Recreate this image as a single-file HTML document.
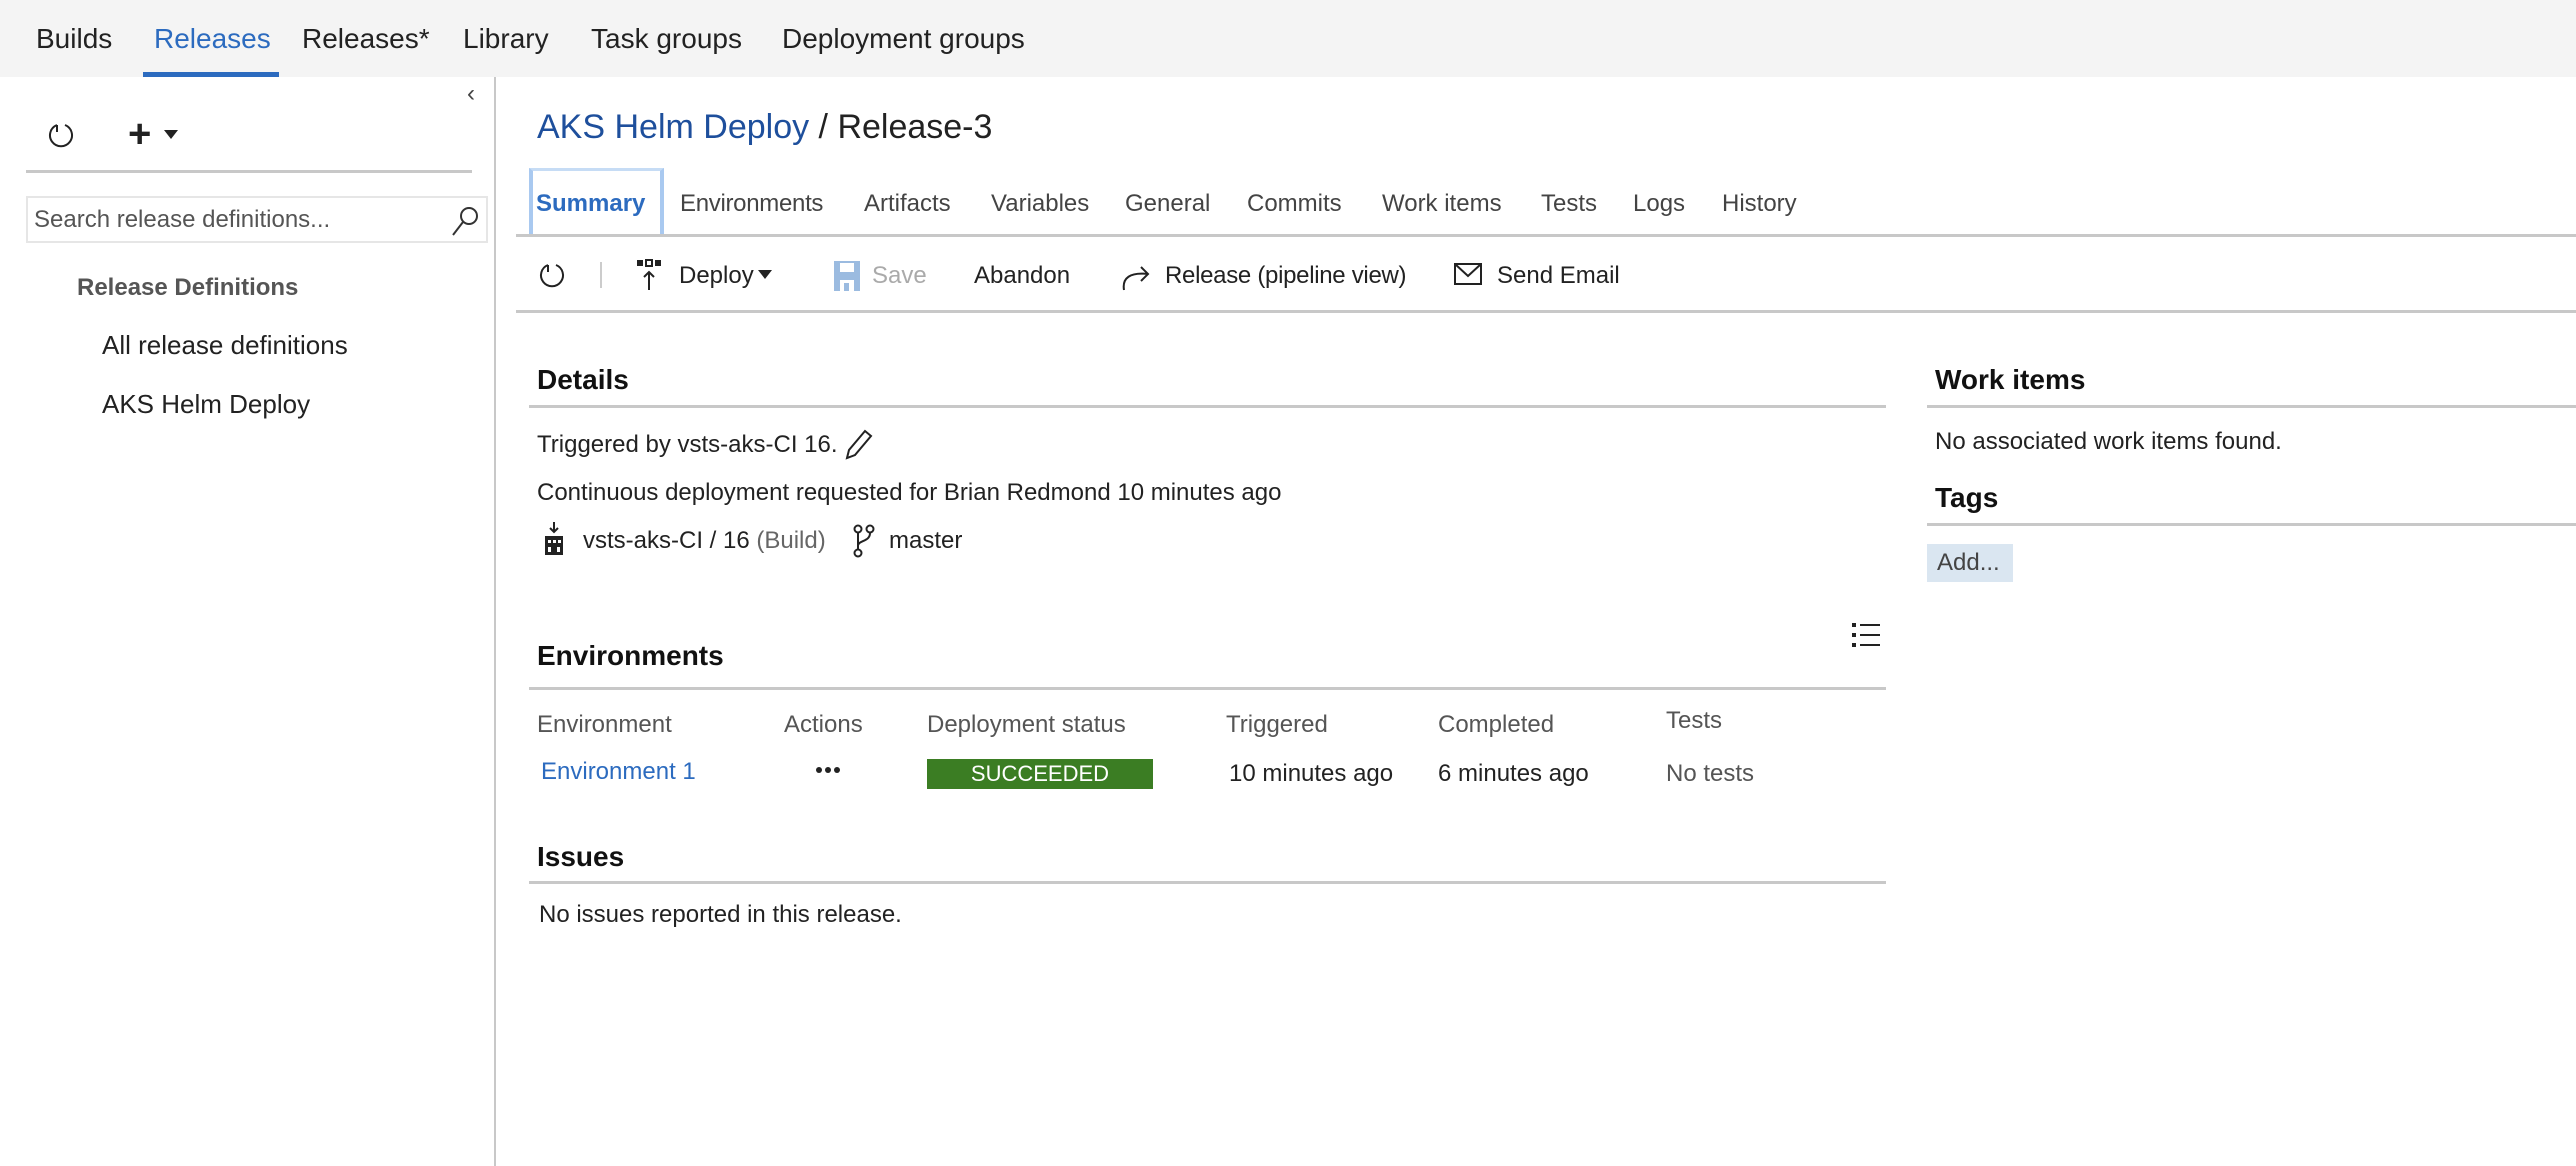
<!DOCTYPE html>
<html><head><meta charset="utf-8"><style>
*{margin:0;padding:0;box-sizing:border-box}
body{width:2576px;height:1166px;position:relative;background:#fff;font-family:"Liberation Sans",sans-serif;color:#222;overflow:hidden}
.a{position:absolute;white-space:nowrap;line-height:1}
.t{font-size:24px}
.h{font-size:28px;font-weight:bold;color:#111}
.ln{position:absolute;height:3px;background:#c8c8c8}
svg{position:absolute;overflow:visible}
</style></head><body>
<div style="position:absolute;left:0;top:0;width:2576px;height:77px;background:#f4f4f4"></div>
<div class="a" style="left:36px;top:25px;font-size:28px">Builds</div>
<div class="a" style="left:154px;top:25px;font-size:28px;color:#2c6bbf">Releases</div>
<div style="position:absolute;left:143px;top:72px;width:136px;height:5px;background:#2c6bbf"></div>
<div class="a" style="left:302px;top:25px;font-size:28px">Releases*</div>
<div class="a" style="left:463px;top:25px;font-size:28px">Library</div>
<div class="a" style="left:591px;top:25px;font-size:28px">Task groups</div>
<div class="a" style="left:782px;top:25px;font-size:28px">Deployment groups</div>

<div style="position:absolute;left:494px;top:77px;width:2px;height:1089px;background:#c8c8c8"></div>
<div class="a" style="left:467px;top:82px;font-size:24px;color:#444">‹</div>
<svg style="left:47px;top:121px" width="30" height="30" viewBox="0 0 30 30"><path d="M10 4 A11 11 0 1 0 18 4 M10 4 L10 11" fill="none" stroke="#222" stroke-width="2"/></svg>
<div class="a" style="left:128px;top:114px;font-size:40px;font-weight:bold">+</div>
<svg style="left:164px;top:130px" width="14" height="10"><path d="M0 0H14L7 9Z" fill="#222"/></svg>
<div class="ln" style="left:26px;top:170px;width:446px"></div>
<div style="position:absolute;left:26px;top:196px;width:462px;height:47px;border:2px solid #e6e6e6"></div>
<div class="a t" style="left:34px;top:208px;color:#555">Search release definitions...</div>
<svg style="left:450px;top:205px" width="30" height="32" viewBox="0 0 30 32"><circle cx="19" cy="11" r="8" fill="none" stroke="#333" stroke-width="2"/><path d="M13 17 L3 30" stroke="#333" stroke-width="2"/></svg>
<div class="a" style="left:77px;top:276px;font-size:24px;font-weight:bold;color:#555">Release Definitions</div>
<div class="a" style="left:102px;top:332px;font-size:26px">All release definitions</div>
<div class="a" style="left:102px;top:391px;font-size:26px">AKS Helm Deploy</div>

<div class="a" style="left:537px;top:110px;font-size:34px;color:#1e4f9c">AKS Helm Deploy <span style="color:#222">/ Release-3</span></div>

<div style="position:absolute;left:529px;top:168px;width:135px;height:67px;border:3px solid #c6dcf5;border-left:4px solid #a9c9f0;border-right:4px solid #a9c9f0;border-bottom:none"></div>
<div class="a t" style="left:536px;top:192px;color:#2c6bbf;font-weight:bold">Summary</div>
<div class="a t" style="left:680px;top:192px;color:#444;letter-spacing:-0.3px">Environments</div>
<div class="a t" style="left:864px;top:192px;color:#444">Artifacts</div>
<div class="a t" style="left:991px;top:192px;color:#444">Variables</div>
<div class="a t" style="left:1125px;top:192px;color:#444">General</div>
<div class="a t" style="left:1247px;top:192px;color:#444">Commits</div>
<div class="a t" style="left:1382px;top:192px;color:#444">Work items</div>
<div class="a t" style="left:1541px;top:192px;color:#444">Tests</div>
<div class="a t" style="left:1633px;top:192px;color:#444">Logs</div>
<div class="a t" style="left:1722px;top:192px;color:#444">History</div>
<div class="ln" style="left:516px;top:234px;width:2060px"></div>

<svg style="left:538px;top:261px" width="30" height="30" viewBox="0 0 30 30"><path d="M10 4 A11 11 0 1 0 18 4 M10 4 L10 11" fill="none" stroke="#222" stroke-width="2"/></svg>
<div style="position:absolute;left:600px;top:262px;width:2px;height:26px;background:#ccc"></div>
<svg style="left:636px;top:258px" width="28" height="34" viewBox="0 0 28 34"><rect x="1" y="2" width="6" height="6" fill="#222"/><rect x="10" y="2" width="6" height="6" fill="none" stroke="#222" stroke-width="2"/><rect x="19" y="2" width="6" height="6" fill="#222"/><path d="M13 32 V14 M8 19 L13 14 L18 19" fill="none" stroke="#222" stroke-width="2"/></svg>
<div class="a t" style="left:679px;top:264px">Deploy</div>
<svg style="left:758px;top:270px" width="14" height="10"><path d="M0 0H14L7 9Z" fill="#222"/></svg>
<svg style="left:834px;top:261px" width="26" height="30" viewBox="0 0 26 30"><rect x="0" y="0" width="26" height="30" fill="#9bbbe0"/><rect x="6" y="2" width="14" height="9" fill="#fff"/><rect x="6" y="19" width="14" height="11" fill="#fff"/><rect x="10" y="22" width="5" height="8" fill="#9bbbe0"/></svg>
<div class="a t" style="left:872px;top:264px;color:#aaa">Save</div>
<div class="a t" style="left:974px;top:264px">Abandon</div>
<svg style="left:1120px;top:260px" width="32" height="32" viewBox="0 0 32 32"><path d="M4 30 C2 18 10 12 28 14 M21 7 L28 14 L21 21" fill="none" stroke="#222" stroke-width="2"/></svg>
<div class="a t" style="left:1165px;top:264px;letter-spacing:-0.3px">Release (pipeline view)</div>
<svg style="left:1454px;top:263px" width="28" height="22" viewBox="0 0 28 22"><rect x="1" y="1" width="26" height="20" fill="none" stroke="#222" stroke-width="2"/><path d="M1 1 L14 13 L27 1" fill="none" stroke="#222" stroke-width="2"/></svg>
<div class="a t" style="left:1497px;top:264px">Send Email</div>
<div class="ln" style="left:516px;top:310px;width:2060px"></div>

<div class="a h" style="left:537px;top:366px">Details</div>
<div class="ln" style="left:529px;top:405px;width:1357px"></div>
<div class="a t" style="left:537px;top:433px">Triggered by vsts-aks-CI 16.</div>
<svg style="left:843px;top:428px" width="30" height="32" viewBox="0 0 30 32"><path d="M4 30 L6 22 L22 3 L28 8 L12 27 Z M4 30 L12 27" fill="none" stroke="#222" stroke-width="2"/></svg>
<div class="a t" style="left:537px;top:481px">Continuous deployment requested for Brian Redmond 10 minutes ago</div>
<svg style="left:543px;top:522px" width="22" height="34" viewBox="0 0 22 34"><path d="M11 0 V10 M7 6 L11 10 L15 6" fill="none" stroke="#222" stroke-width="2"/><rect x="2" y="14" width="18" height="19" fill="#222"/><rect x="5" y="18" width="3" height="3" fill="#fff"/><rect x="10" y="18" width="3" height="3" fill="#fff"/><rect x="15" y="18" width="3" height="3" fill="#fff"/><rect x="5" y="25" width="3" height="5" fill="#fff"/><rect x="14" y="25" width="3" height="5" fill="#fff"/></svg>
<div class="a t" style="left:583px;top:529px">vsts-aks-CI / 16 <span style="color:#666">(Build)</span></div>
<svg style="left:852px;top:524px" width="24" height="34" viewBox="0 0 24 34"><circle cx="6" cy="5" r="3.5" fill="none" stroke="#222" stroke-width="2"/><circle cx="18" cy="5" r="3.5" fill="none" stroke="#222" stroke-width="2"/><circle cx="6" cy="29" r="3.5" fill="none" stroke="#222" stroke-width="2"/><path d="M6 9 V25 M18 9 C18 18 6 16 6 22" fill="none" stroke="#222" stroke-width="2"/></svg>
<div class="a t" style="left:889px;top:529px">master</div>

<svg style="left:1852px;top:623px" width="28" height="24" viewBox="0 0 28 24"><rect x="0" y="0" width="4" height="4" fill="#222"/><rect x="8" y="1" width="20" height="2" fill="#222"/><rect x="0" y="10" width="4" height="4" fill="#222"/><rect x="8" y="11" width="20" height="2" fill="#222"/><rect x="0" y="20" width="4" height="4" fill="#222"/><rect x="8" y="21" width="20" height="2" fill="#222"/></svg>
<div class="a h" style="left:537px;top:642px">Environments</div>
<div class="ln" style="left:529px;top:687px;width:1357px"></div>
<div class="a t" style="left:537px;top:713px;color:#555">Environment</div>
<div class="a t" style="left:784px;top:713px;color:#555">Actions</div>
<div class="a t" style="left:927px;top:713px;color:#555">Deployment status</div>
<div class="a t" style="left:1226px;top:713px;color:#555">Triggered</div>
<div class="a t" style="left:1438px;top:713px;color:#555">Completed</div>
<div class="a t" style="left:1666px;top:709px;color:#555">Tests</div>
<div class="a t" style="left:541px;top:760px;color:#2c6bbf">Environment 1</div>
<svg style="left:816px;top:767px" width="24" height="6"><circle cx="3" cy="3" r="3" fill="#222"/><circle cx="12" cy="3" r="3" fill="#222"/><circle cx="21" cy="3" r="3" fill="#222"/></svg>
<div style="position:absolute;left:927px;top:759px;width:226px;height:30px;background:#3b7d23;color:#fff;font-size:22px;text-align:center;line-height:30px">SUCCEEDED</div>
<div class="a t" style="left:1229px;top:762px">10 minutes ago</div>
<div class="a t" style="left:1438px;top:762px">6 minutes ago</div>
<div class="a t" style="left:1666px;top:762px;color:#555">No tests</div>

<div class="a h" style="left:537px;top:843px">Issues</div>
<div class="ln" style="left:529px;top:881px;width:1357px"></div>
<div class="a t" style="left:539px;top:903px">No issues reported in this release.</div>

<div class="a h" style="left:1935px;top:366px">Work items</div>
<div class="ln" style="left:1927px;top:405px;width:649px"></div>
<div class="a t" style="left:1935px;top:430px">No associated work items found.</div>
<div class="a h" style="left:1935px;top:484px">Tags</div>
<div class="ln" style="left:1927px;top:523px;width:649px"></div>
<div style="position:absolute;left:1927px;top:544px;width:86px;height:38px;background:#dae6f1;color:#444;font-size:24px;line-height:38px;padding-left:10px">Add...</div>
</body></html>
